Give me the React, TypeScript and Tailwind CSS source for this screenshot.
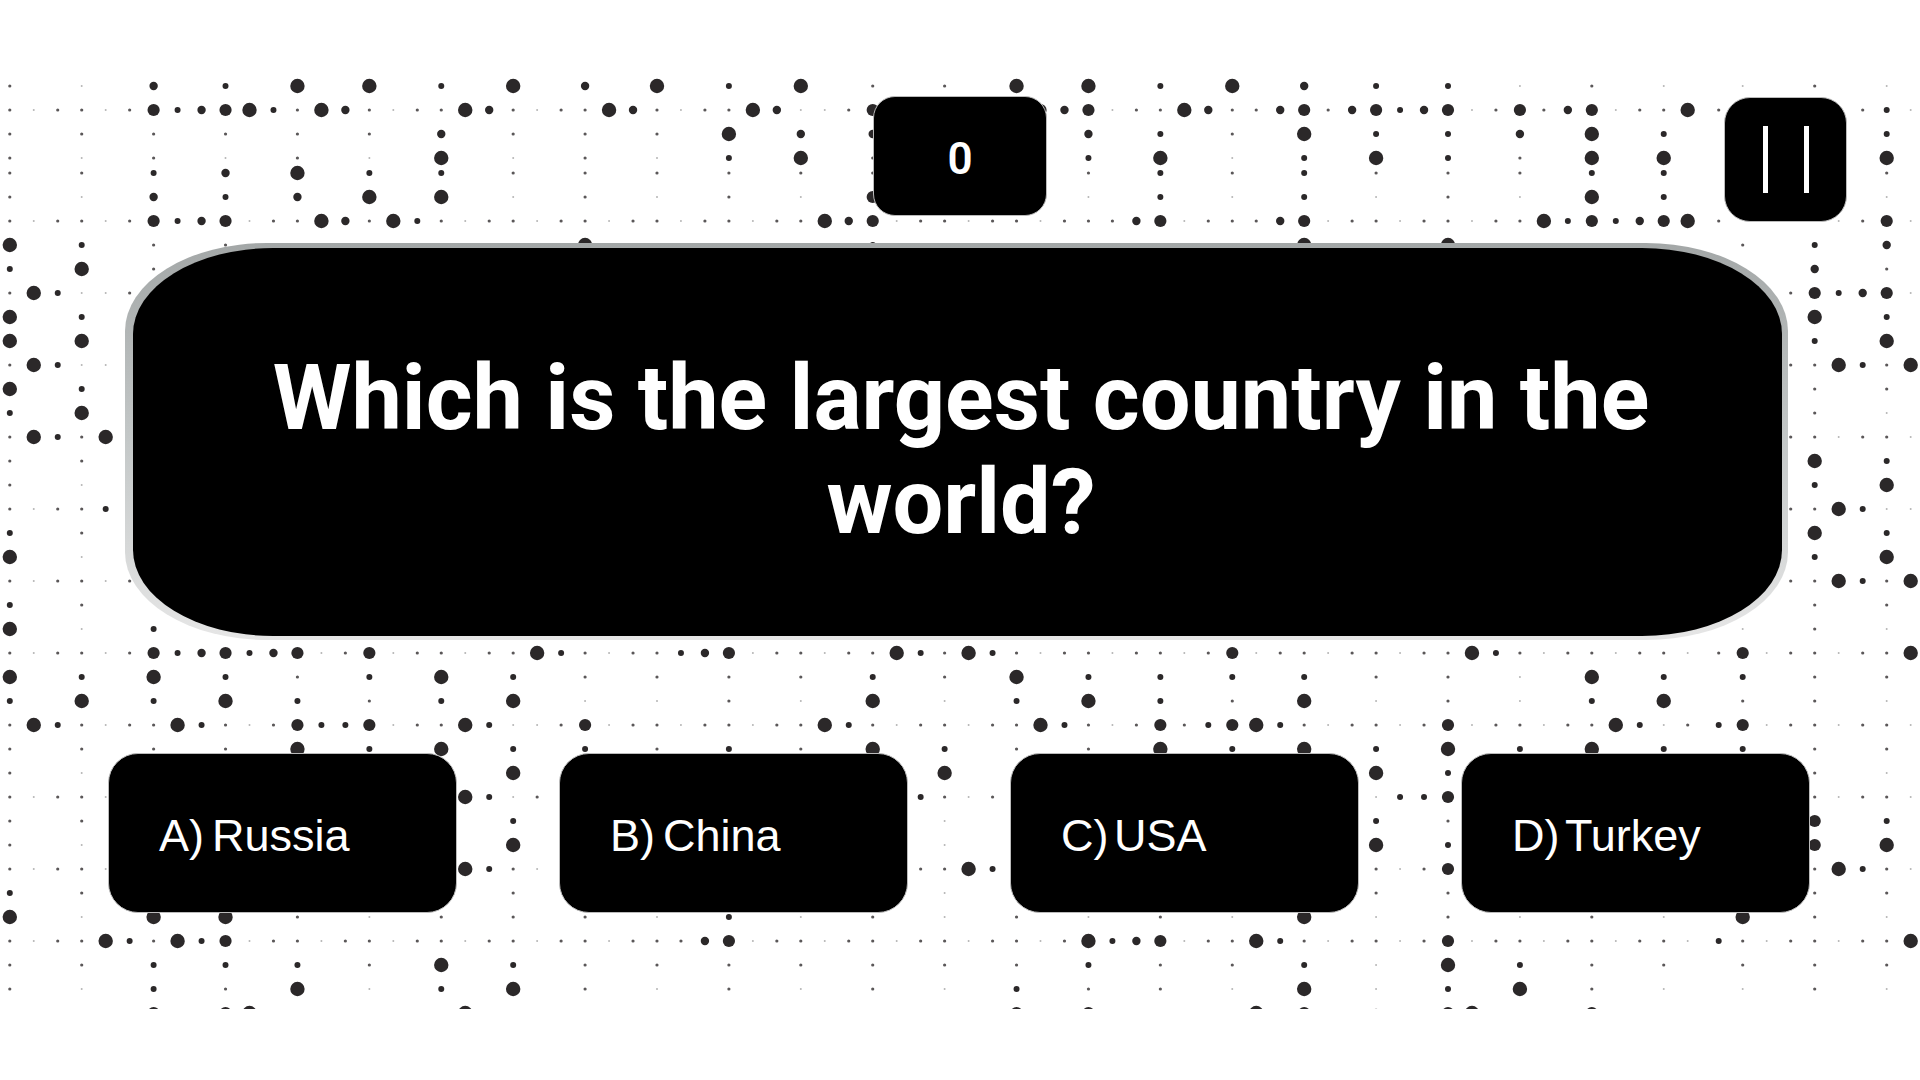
const SIZES: Record<string, { r: number; fill: string }> = {
  "1": { r: 1, fill: "#b5b5b5" },
  "2": { r: 1.6, fill: "#5a5758" },
  "3": { r: 3, fill: "#2b2829" },
  "4": { r: 4.2, fill: "#2b2829" },
  "5": { r: 6.1, fill: "#2b2829" },
  "6": { r: 7.2, fill: "#2b2829" },
};

const z = (n: number) => "0".repeat(n);

// dots that lie on the 24px lattice, rows of every third column
const vrow = (left: string, right: string) => left + z(27 - left.length - right.length) + right;
// rows of every column
const hrow = (left: string, right: string) => left + z(80 - left.length - right.length) + right;

const ROWS: [number, string][] = [
  [86, "2143663646" + "3622663643" + "3121121"],
  [110, "2122125345" + "6326421226" + "4212264212" + "2641125000" + "0005451226" + "4224524534" + "5125245122" + "6200000231"],
  [134, "2222224222" + "6440043263" + "3463003"],
  [158, "2121216121" + "3620036136" + "3266006"],
  [173, "2234633222" + "2220023232" + "2233002"],
  [197, "2143466121" + "2150013131" + "2163001"],
  [221, "2122125345" + "1226426321" + "2212212212" + "2122645122" + "1221222451" + "2224512212" + "2122635345" + "6200001251"],
  [245, "6322202062" + "2030200062" + "6201234"],
  [269, vrow("362", "42")],
  [293, hrow("263112", "253451")],
  [317, vrow("63", "63")],
  [341, vrow("66", "36")],
  [365, hrow("26311", "226326")],
  [389, vrow("63", "22")],
  [413, vrow("36", "21")],
  [437, hrow("26326", "221221")],
  [461, vrow("22", "63")],
  [485, vrow("21", "36")],
  [509, hrow("21223", "226311")],
  [533, vrow("32", "63")],
  [557, vrow("61", "36")],
  [581, hrow("212212", "226326")],
  [605, vrow("32", "22")],
  [629, vrow("613", "121")],
  [653, "2122125345" + "3451251221" + "2263212234" + "5122122632" + "6321221221" + "2512212212" + "2632122122" + "1251221226"],
  [677, "6363236322" + "2232633332" + "2163322"],
  [701, "3636323611" + "2161363261" + "2136221"],
  [725, "2632122632" + "1253351226" + "3112512212" + "2122632122" + "1226321252" + "3563212212" + "5122122631" + "2351221221"],
  [749, "2222636332" + "3263226363" + "6363322"],
  [773, "210000060000060000063000021"],
  [797, "21221" + z(14) + "6312" + z(15) + "3212" + z(15) + "1335" + z(14) + "21221"],
  [821, "220000030000010000032000053"],
  [845, "210000060000010000063000056"],
  [869, "21221" + z(14) + "6321" + z(15) + "2263" + z(15) + "2125" + z(14) + "26321"],
  [893, "320000020000010000022000022"],
  [917, "6166212221" + "3121212161" + "2121621"],
  [941, "2122632635" + "1221221221" + "2212212224" + "5122122122" + "1221263451" + "2263212212" + "5122122122" + "1321221226"],
  [965, "2233326322" + "2222232231" + "6322222"],
  [989, "2132613621" + "2121322161" + "3621121"],
  [1013, "0000005035" + "6000000006" + "3000000000" + z(10) + "0050350000" + "0063500403" + "5600005000" + z(10)],
];

// the lattice has a seam near x=1700
const colX = (k: number) => (k <= 70 ? 9.8 + 23.97 * k : 1718.7 + 24 * (k - 71));

function Dots() {
  return (
    <svg className="absolute left-0 top-0 w-[1920px] h-[1009px] blur-[0.4px]" viewBox="0 0 1920 1009">
      {ROWS.map(([y, row]) =>
        row.split("").map((c, i) => {
          const size = SIZES[c];
          if (!size) return null;
          const k = row.length === 27 ? i * 3 : i;
          return <circle key={y + "-" + i} cx={colX(k)} cy={y} r={size.r} fill={size.fill} />;
        })
      )}
    </svg>
  );
}

const ANSWERS = [
  { label: "A)", text: "Russia" },
  { label: "B)", text: "China" },
  { label: "C)", text: "USA" },
  { label: "D)", text: "Turkey" },
];

export default function App() {
  return (
    <div className="relative w-full h-[1080px] bg-white overflow-hidden">
      <Dots />
      <div className="relative flex flex-col pt-[96px]">
        <div className="h-[126px] grid grid-cols-[1fr_174px_1fr] items-start">
          <div />
          <div className="h-[120px] flex items-center justify-center pt-[6px] bg-black rounded-[22px] border border-[#bbbbbb] text-white text-[44px] font-semibold font-['Roboto',sans-serif]">
            0
          </div>
          <div className="flex justify-end pr-[73px] pt-[1px]">
            <button className="w-[123px] h-[125px] flex items-center justify-center gap-[36px] bg-black rounded-[26px] border border-[#bbbbbb]">
              <span className="w-[5px] h-[67px] bg-white" />
              <span className="w-[5px] h-[67px] bg-white" />
            </button>
          </div>
        </div>

        <div className="ml-[125px] mt-[21px] w-[1663px] h-[397px] pl-[8px] pr-[6px] pt-[5px] pb-[4px] rounded-[142px/88px] bg-gradient-to-b from-[#a3a7a7] via-[#c4c8c8] to-[#e6e6e6]">
          <div className="w-full h-full flex items-center justify-center pl-[97px] pr-[90px] pt-[17px] bg-black rounded-[140px/86px]">
            <h1 className="text-center text-white text-[90px] leading-[104px] font-bold font-['Roboto',sans-serif]">
              Which is the largest country in the world?
            </h1>
          </div>
        </div>

        <div className="mt-[113px] pl-[108px] pr-[110px] flex justify-between">
          {ANSWERS.map((a) => (
            <button
              key={a.label}
              className="w-[349px] h-[160px] flex items-center pl-[50px] pt-[5px] bg-black rounded-[30px] border border-[#bbbbbb] text-white text-[45px] font-['Liberation_Sans',Arial,sans-serif]"
            >
              <span className="w-[53px] text-left">{a.label}</span>
              <span>{a.text}</span>
            </button>
          ))}
        </div>
      </div>
    </div>
  );
}
